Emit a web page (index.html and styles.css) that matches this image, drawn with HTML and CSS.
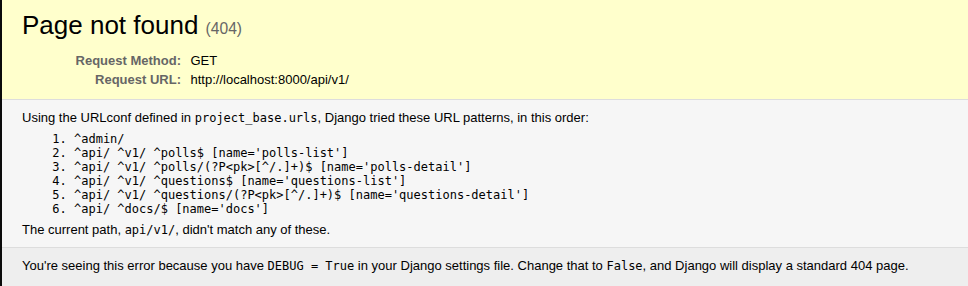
FILE: index.html
```
<!DOCTYPE html>
<html lang="en">
<head>
<meta charset="utf-8">
<title>Page not found at /api/v1/</title>
<link rel="stylesheet" href="styles.css">
</head>
<body>
<div class="summary">
  <h1 class="title">Page not found <span class="code-num">(404)</span></h1>
  <table class="meta">
    <tr><th>Request Method:</th><td>GET</td></tr>
    <tr><th>Request URL:</th><td>http://localhost:8000/api/v1/</td></tr>
  </table>
</div>
<div class="info">
  <p>Using the URLconf defined in <code>project_base.urls</code>, Django tried these URL patterns, in this order:</p>
  <ol class="patterns">
    <li>^admin/</li>
    <li>^api/ ^v1/ ^polls$ [name='polls-list']</li>
    <li>^api/ ^v1/ ^polls/(?P&lt;pk&gt;[^/.]+)$ [name='polls-detail']</li>
    <li>^api/ ^v1/ ^questions$ [name='questions-list']</li>
    <li>^api/ ^v1/ ^questions/(?P&lt;pk&gt;[^/.]+)$ [name='questions-detail']</li>
    <li>^api/ ^docs/$ [name='docs']</li>
  </ol>
  <p>The current path, <code>api/v1/</code>, didn't match any of these.</p>
</div>
<div class="explanation">
  <p>You're seeing this error because you have <code>DEBUG = True</code> in your Django settings file. Change that to <code>False</code>, and Django will display a standard 404 page.</p>
</div>
</body>
</html>
```
FILE: styles.css
```
* { margin: 0; padding: 0; }
html { background: #eee; }
body {
  font-family: "Liberation Sans", Arial, sans-serif;
  font-size: 13px;
  background: #eee;
  color: #000;
  border-left: 2px solid #0b0b0b;
  min-height: 286px;
  box-sizing: border-box;
}
.summary, .info, .explanation {
  padding: 10px 20px;
  border-bottom: 1px solid #ddd;
}
.summary { background: #ffc; }
.info { background: #f6f6f6; }
.explanation { background: #eee; border-bottom: none; }
.title {
  font-size: 26px;
  font-weight: normal;
  margin-bottom: 10.4px;
}
.code-num { font-size: 60%; color: #666; }
.meta { border: none; border-collapse: collapse; width: 100%; }
.meta th, .meta td { vertical-align: top; padding: 2px 3px; }
.meta th {
  width: 156px;
  text-align: right;
  color: #666;
  padding-right: 6.5px;
}
.meta td { text-align: left; }
code, .patterns li {
  font-family: "DejaVu Sans Mono", monospace;
  font-size: 12px;
}
.patterns { margin: 6.5px 52px; }
```
